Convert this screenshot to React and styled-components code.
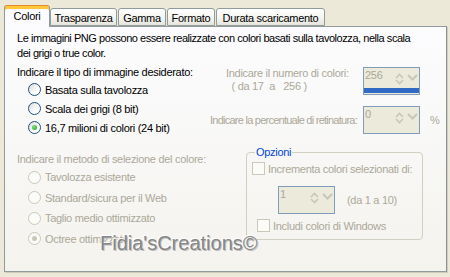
import React from "react"
import styled, { createGlobalStyle } from "styled-components"

const GlobalStyle = createGlobalStyle`
  html, body {
    margin: 0;
    padding: 0;
    background: #ece9d8;
  }
  body {
    font-family: "Liberation Sans", Arial, sans-serif;
    font-size: 11px;
    letter-spacing: -0.3px;
    color: #000;
  }
`

const Window = styled.div`
  width: 450px;
  height: 277px;
  box-sizing: border-box;
  padding: 4px 0 0 4px;
  background: #ece9d8;
`

const TabStrip = styled.div`
  display: flex;
  align-items: flex-end;
  height: 22px;
  position: relative;
  z-index: 2;
`

const Tab = styled.div`
  box-sizing: border-box;
  width: ${(p) => p.$w}px;
  height: ${(p) => (p.$active ? "22px" : "18px")};
  padding-top: ${(p) => (p.$active ? "3px" : "2px")};
  margin-right: ${(p) => (p.$active ? "0" : "1px")};
  margin-bottom: ${(p) => (p.$active ? "-1px" : "0")};
  border: 1px solid #919b9c;
  border-bottom: ${(p) => (p.$active ? "none" : "1px solid #919b9c")};
  border-radius: 3px 3px 0 0;
  line-height: 14px;
  text-align: center;
  white-space: nowrap;
  background: ${(p) =>
    p.$active ? "#fcfcfe" : "linear-gradient(#ffffff, #f3f3ef 60%, #e6e5dd)"};
  box-shadow: ${(p) => (p.$active ? "inset 0 3px 0 #ffc83c, inset 0 1px 0 #e68b2c" : "none")};
  border-top-color: ${(p) => (p.$active ? "#e68b2c" : "#919b9c")};
`

const Panel = styled.div`
  position: relative;
  width: 443px;
  height: 246px;
  box-sizing: border-box;
  border: 1px solid #919b9c;
  border-right-color: #8a9294;
  box-shadow: 1px 1px 0 #d0cebf;
  background: linear-gradient(#fcfcfe, #f4f3ee);
  padding: 4px 0 0 12px;
`

const Intro = styled.p`
  margin: 0;
  line-height: 15px;
  white-space: nowrap;
  letter-spacing: -0.45px;
`

const Row = styled.div`
  position: relative;
  display: flex;
  margin-top: ${(p) => p.$top || 0}px;
`

const Column = styled.div`
  display: flex;
  flex-direction: column;
  width: ${(p) => p.$width}px;
`

const Heading = styled.div`
  line-height: 15px;
  color: ${(p) => (p.$disabled ? "#aca899" : "#000")};
  white-space: nowrap;
`

const OptionRow = styled.label`
  display: flex;
  align-items: center;
  height: ${(p) => p.$h}px;
  padding-left: 11px;
  gap: 4px;
  color: ${(p) => (p.$disabled ? "#aca899" : "#000")};
  white-space: nowrap;
`

const RadioDot = styled.span`
  box-sizing: border-box;
  width: 13px;
  height: 13px;
  flex: none;
  border-radius: 50%;
  border: 1px solid ${(p) => (p.$disabled ? "#cac8bb" : "#1c5180")};
  background: ${(p) =>
    p.$disabled ? "#fbfbf8" : "linear-gradient(135deg, #dcdcd7, #ffffff 70%)"};
  display: flex;
  align-items: center;
  justify-content: center;
  &::after {
    content: "";
    width: 5px;
    height: 5px;
    border-radius: 50%;
    display: ${(p) => (p.$checked ? "block" : "none")};
    background: ${(p) =>
      p.$disabled ? "#cac8bb" : "radial-gradient(circle at 35% 35%, #7be07a, #21a121)"};
  }
`

const CheckBox = styled.span`
  box-sizing: border-box;
  width: 13px;
  height: 13px;
  flex: none;
  border: 1px solid #cac8bb;
  background: #fbfbf8;
`

const SettingsGrid = styled.div`
  position: absolute;
  top: 0;
  left: 188px;
  display: grid;
  grid-template-columns: 152px 57px 26px;
  column-gap: 6px;
  row-gap: 11px;
  align-items: center;
  margin-top: 2px;
`

const SettingLabel = styled.div`
  color: #aca899;
  line-height: 13px;
  white-space: nowrap;
  text-align: ${(p) => p.$align || "left"};
  padding-left: ${(p) => p.$indent || 0}px;
  align-self: ${(p) => (p.$top ? "start" : "center")};
  letter-spacing: ${(p) => (p.$tight ? "-0.75px" : "inherit")};
`

const SpinBox = styled.div`
  box-sizing: border-box;
  width: 57px;
  height: 28px;
  border: 1px solid #7f9db9;
  background: #ebeadb;
  display: flex;
  flex-direction: column;
`

const SpinTop = styled.div`
  display: flex;
  height: 20px;
`

const SpinValue = styled.div`
  flex: 1;
  color: #aca899;
  padding: 1px 0 0 1px;
  line-height: 13px;
`

const SpinButtons = styled.div`
  width: 12px;
  display: flex;
  flex-direction: column;
  justify-content: center;
  align-items: center;
  padding-top: 1px;
`

const DropButton = styled.div`
  width: 14px;
  display: flex;
  align-items: center;
  justify-content: center;
  padding-bottom: 2px;
`

const SpinBar = styled.div`
  margin-top: auto;
  height: 5px;
  margin-bottom: 1px;
  background: ${(p) => (p.$on ? "#316ac5" : "transparent")};
`

const Unit = styled.div`
  color: #aca899;
  padding-left: 4px;
`

const Group = styled.fieldset`
  box-sizing: border-box;
  width: 177px;
  height: 94px;
  margin: -6px 0 0 41px;
  padding: 0 0 0 5px;
  border: 1px solid #d0d0bf;
  border-radius: 4px;
  display: flex;
  flex-direction: column;
`

const Legend = styled.legend`
  color: #0046d5;
  padding: 0 1px;
  margin-left: 3px;
  line-height: 13px;
`

const CheckRow = styled.div`
  display: flex;
  align-items: center;
  gap: 3px;
  color: #aca899;
  white-space: nowrap;
  height: 15px;
  margin-top: ${(p) => p.$top || 0}px;
  padding-left: ${(p) => p.$indent || 0}px;
`

const StepRow = styled.div`
  display: flex;
  align-items: center;
  gap: 12px;
  margin: 10px 0 0 26px;
  color: #aca899;
`

const Watermark = styled.div`
  position: absolute;
  left: 95px;
  top: 205px;
  font-size: 20px;
  font-weight: normal;
  letter-spacing: 0;
  color: #868686;
  text-shadow: -1px -1px 0 #ffffff, 1px 1px 0 #bdbdbd;
  pointer-events: none;
`

const Chevron = ({ up }) => (
  <svg width='9' height='6' viewBox='0 0 9 6'>
    <path
      d={up ? "M1 5 L4.5 1.5 L8 5" : "M1 1 L4.5 4.5 L8 1"}
      fill='none'
      stroke='#c9c7ba'
      strokeWidth='1.6'
    />
  </svg>
)

const Spinner = ({ value, bar }) => (
  <SpinBox>
    <SpinTop>
      <SpinValue>{value}</SpinValue>
      <SpinButtons>
        <Chevron up />
        <Chevron />
      </SpinButtons>
      <DropButton>
        <svg width='11' height='7' viewBox='0 0 11 7'>
          <path d='M1 1 L5.5 5.5 L10 1' fill='none' stroke='#c9c7ba' strokeWidth='2' />
        </svg>
      </DropButton>
    </SpinTop>
    <SpinBar $on={bar} />
  </SpinBox>
)

const Radio = ({ label, checked, disabled, h }) => (
  <OptionRow $disabled={disabled} $h={h}>
    <RadioDot $checked={checked} $disabled={disabled} />
    {label}
  </OptionRow>
)

const tabs = [
  { label: "Colori", w: 46 },
  { label: "Trasparenza", w: 67 },
  { label: "Gamma", w: 48 },
  { label: "Formato", w: 48 },
  { label: "Durata scaricamento", w: 109 }
]

export default function App() {
  return (
    <>
      <GlobalStyle />
      <Window>
        <TabStrip>
          {tabs.map((t, i) => (
            <Tab key={t.label} $active={i === 0} $w={t.w}>
              {t.label}
            </Tab>
          ))}
        </TabStrip>
        <Panel>
          <Intro>
            Le immagini PNG possono essere realizzate con colori basati sulla tavolozza, nella scala
            <br />
            dei grigi o true color.
          </Intro>

          <Row $top={4}>
            <Column $width={188}>
              <Heading>Indicare il tipo di immagine desiderato:</Heading>
              <Radio h={19} label='Basata sulla tavolozza' />
              <Radio h={19} label='Scala dei grigi (8 bit)' />
              <Radio h={19} checked label='16,7 milioni di colori (24 bit)' />
            </Column>
            <SettingsGrid>
              <SettingLabel $top $indent={21}>
                Indicare il numero di colori:
                <br />
                &nbsp;&nbsp;( da 17 &nbsp;a &nbsp;&nbsp;256 )
              </SettingLabel>
              <Spinner value='256' bar />
              <span />
              <SettingLabel $align='right' $tight>
                Indicare la percentuale di retinatura:
              </SettingLabel>
              <Spinner value='0' />
              <Unit>%</Unit>
            </SettingsGrid>
          </Row>

          <Row $top={15}>
            <Column $width={188}>
              <Heading $disabled>Indicare il metodo di selezione del colore:</Heading>
              <Radio disabled h={20.5} label='Tavolozza esistente' />
              <Radio disabled h={20.5} label='Standard/sicura per il Web' />
              <Radio disabled h={20.5} label='Taglio medio ottimizzato' />
              <Radio disabled checked h={20.5} label='Octree ottimizzato' />
            </Column>
            <Group>
              <Legend>Opzioni</Legend>
              <CheckRow $top={2}>
                <CheckBox />
                Incrementa colori selezionati di:
              </CheckRow>
              <StepRow>
                <Spinner value='1' />
                (da 1 a 10)
              </StepRow>
              <CheckRow $top={4} $indent={5}>
                <CheckBox />
                Includi colori di Windows
              </CheckRow>
            </Group>
          </Row>

          <Watermark>Fidia'sCreations©</Watermark>
        </Panel>
      </Window>
    </>
  )
}
